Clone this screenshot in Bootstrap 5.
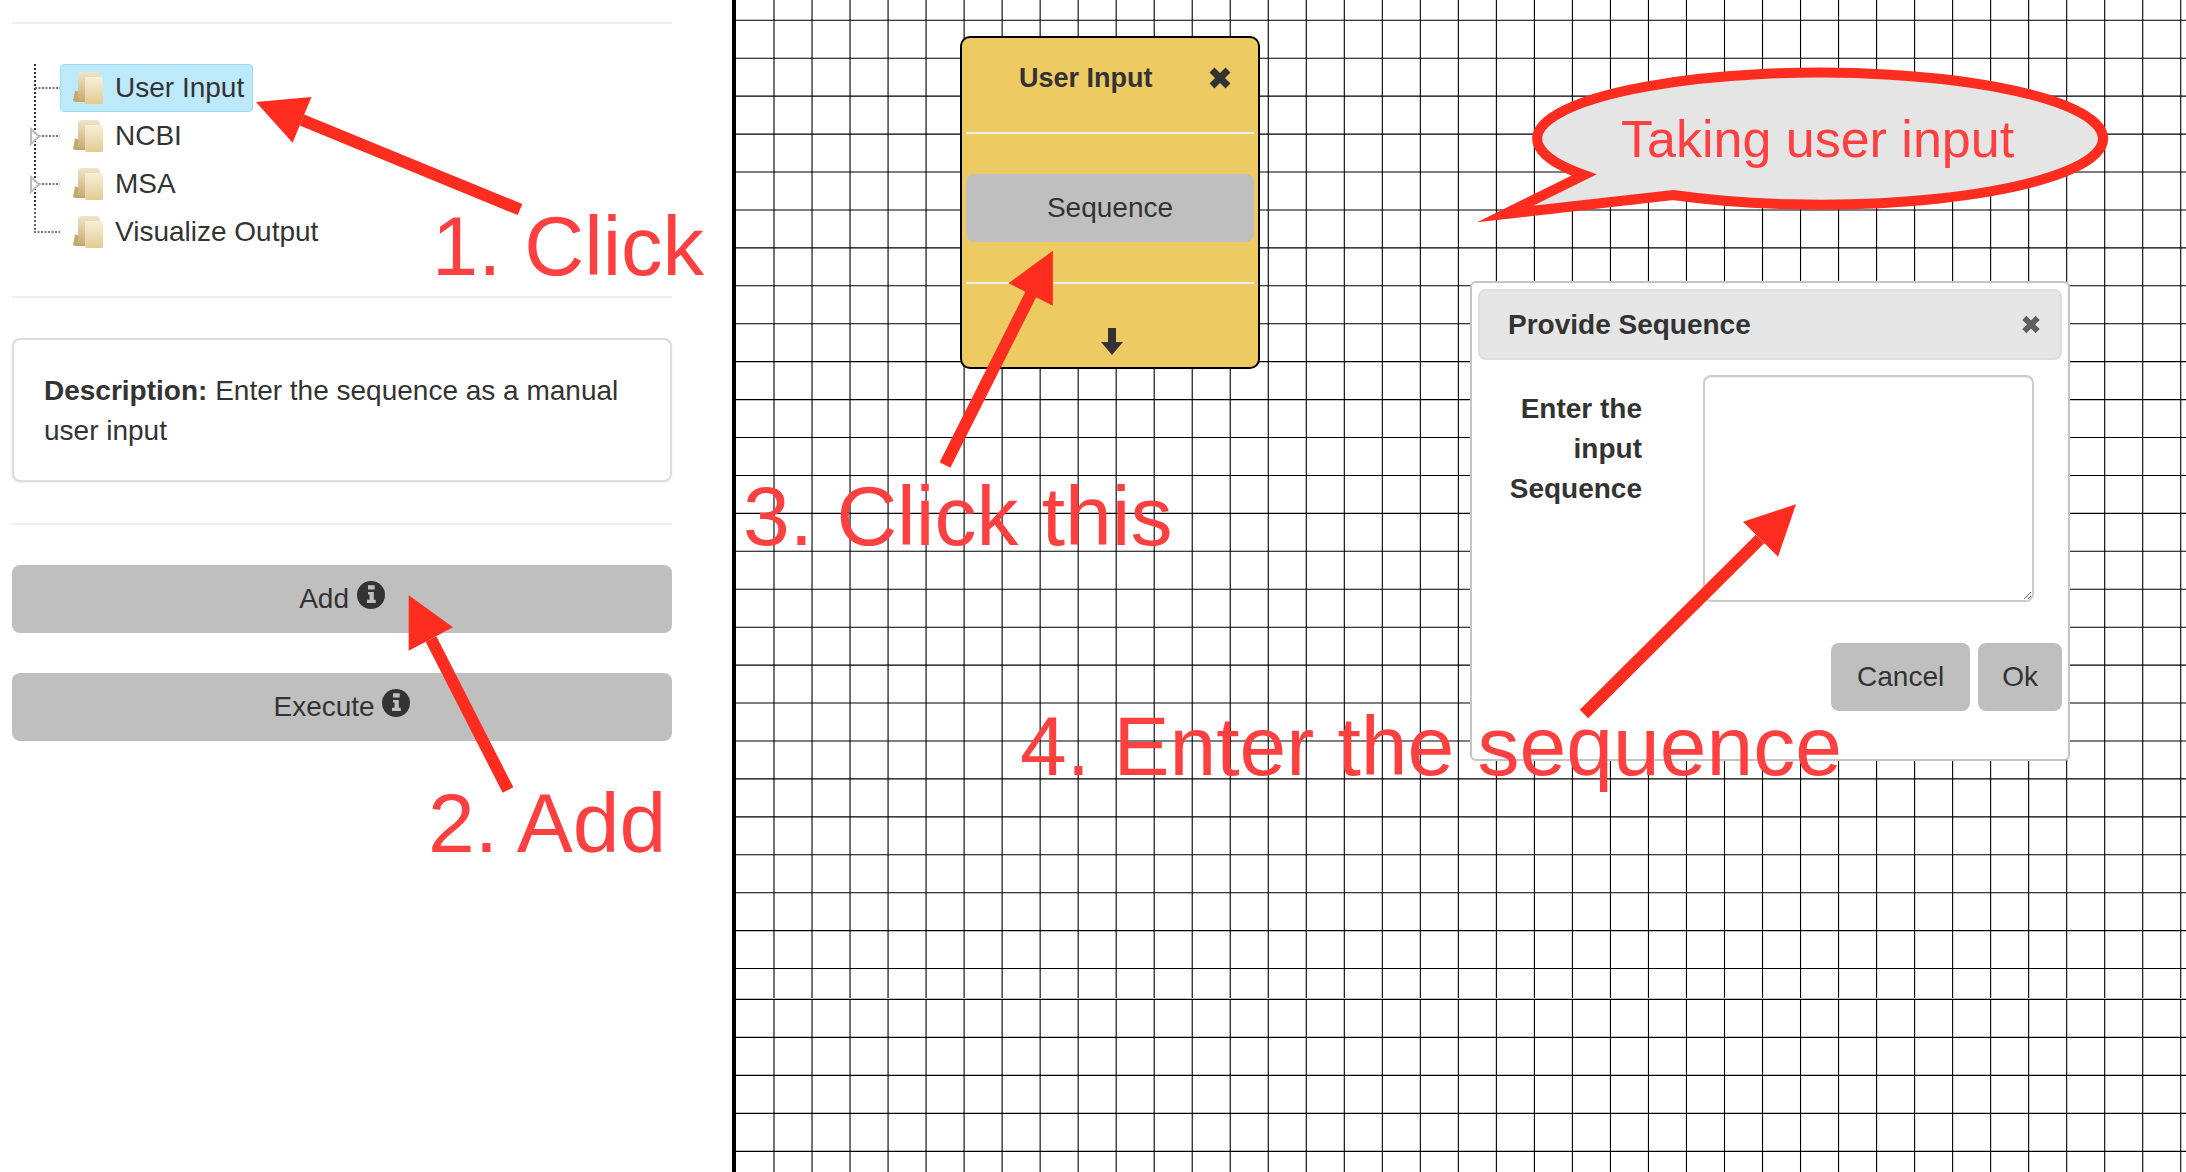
<!DOCTYPE html>
<html lang="en">
<head>
    <meta charset="UTF-8">
    <title>Workflow Builder</title>
    <link href="https://cdn.jsdelivr.net/npm/bootstrap@5.3.3/dist/css/bootstrap.min.css" rel="stylesheet">
    <style>
        body { font-family: "Liberation Sans", Arial, sans-serif; font-size: 28px; line-height: 40px; color: #333; overflow: hidden; }
        .page-wrap { width: 2186px; height: 1172px; }

        /* left panel */
        .side-panel { width: 732px; padding: 22px 60px 0 12px; }
        .rule { margin: 0; border: 0; border-top: 2px solid #eee; opacity: 1; }
        .tree-list { margin: 40px 0; }
        .tree-row { height: 48px; }
        .tree-label { height: 48px; padding: 0 8px 0 12px; gap: 12px; border: 1px solid transparent; border-radius: 4px; }
        .tree-label.picked { background: #bde9fd; border-color: #a5d8ee; }
        .desc-box { margin: 40px 0 41px; padding: 31px 30px 29px; border: 2px solid #ddd; border-radius: 8px; box-shadow: 0 1px 2px rgba(0,0,0,.08); }
        .grey-btn { background: #bfbfbf; border: 0; border-radius: 8px; color: #333; font-size: 28px; line-height: 40px; padding: 14px 0; }
        .grey-btn svg { vertical-align: -1px; }
        .side-actions { margin-top: 40px; gap: 40px; }

        /* canvas */
        .grid-canvas { border-left: 4px solid #000; background: #fff; }
        .grid-lines { left: 0; top: 0; width: 100%; height: 100%; }
        .flow-node { left: 224px; top: 36px; width: 300px; height: 333px; padding: 0 4px; background: #eeca62; border: 2px solid #000; border-radius: 10px; }
        .node-head { height: 80px; padding: 0 22px 0 53px; font-weight: 700; font-size: 27px; }
        .flow-node .rule-a { margin: 14px 0 40px; }
        .flow-node .rule-b { margin: 40px 0 44px; }
        .node-foot { padding-left: 3px; }

        .dlg-box { left: 734px; top: 281px; width: 600px; height: 480px; padding: 6px; border: 2px solid #c4c4c4; border-radius: 6px; }
        .dlg-head { height: 71px; padding: 0 19px 0 28px; background: #e6e6e6; border: 2px solid #ddd; border-radius: 8px !important; font-weight: 700; }
        .dlg-main { margin-top: 15px; gap: 61px; }
        .dlg-label { width: 164px; padding: 14px 0 0 14px; text-align: right; font-weight: 700; }
        .dlg-input { width: 331px; height: 227px; border: 2px solid #ccc; border-radius: 8px; box-shadow: inset 0 1px 1px rgba(0,0,0,.075); }
        .dlg-foot { margin-top: 41px; gap: 8px; }
        .dlg-foot .grey-btn { padding: 14px 26px; }
        .dlg-foot .ok-btn { padding: 14px 24px; }

        /* red annotations drawn over the screenshot */
        .mark-layer { left: 0; top: 0; width: 2186px; height: 1172px; pointer-events: none; }
        .mark-text { position: absolute; font-size: 84px; line-height: 1; color: #ff4040; white-space: nowrap; }
        .mark-1 { left: 432px; top: 205px; font-size: 83px; }
        .mark-2 { left: 428px; top: 781px; }
        .mark-3 { left: 743px; top: 474px; }
        .mark-4 { left: 1020px; top: 704px; }
        .mark-bubble { left: 1621px; top: 113px; font-size: 52px; }
    </style>
</head>
<body>

<svg width="0" height="0" class="position-absolute">
    <defs>
        <linearGradient id="folderBack" x1="0" y1="0" x2="0" y2="1">
            <stop offset="0" stop-color="#f0e5c8"/>
            <stop offset="1" stop-color="#c9ae75"/>
        </linearGradient>
        <linearGradient id="folderFront" x1="0" y1="0" x2="0" y2="1">
            <stop offset="0" stop-color="#f8f0da"/>
            <stop offset="1" stop-color="#e3cb92"/>
        </linearGradient>
        <symbol id="folder" viewBox="0 0 30 32">
            <path d="M0 29 L2 19 H13 V30 H2 Z" fill="#c4a86e"/>
            <rect x="5" y="0" width="22" height="28" rx="3" fill="url(#folderBack)"/>
            <rect x="12" y="5" width="18" height="27" rx="1.5" fill="url(#folderFront)"/>
        </symbol>
        <symbol id="info" viewBox="0 0 28 28">
            <circle cx="14" cy="14" r="14" fill="#333"/>
            <path d="M11 4.3 H17.7 V8.4 H11 Z M11 11 H16.8 V18.8 H18.8 V22 H10 V18.8 H12.6 V13.4 H11 Z" fill="#bfbfbf"/>
        </symbol>
        <symbol id="cross" viewBox="0 0 24 22">
            <path d="M4 3 L20 19 M20 3 L4 19" stroke="#333" stroke-width="7" fill="none"/>
        </symbol>
    </defs>
</svg>

<div class="page-wrap d-flex position-relative">

    <div class="side-panel flex-shrink-0">
        <hr class="rule">

        <ul class="tree-list list-unstyled">
            <li class="tree-row d-flex">
                <svg width="48" height="48"><path d="M23 0 V48" stroke="#333" stroke-width="2" stroke-dasharray="2 2"/><path d="M23 24 H48" stroke="#777" stroke-width="2" stroke-dasharray="2 1.5"/></svg>
                <span class="tree-label picked d-inline-flex align-items-center">
                    <svg width="30" height="32"><use href="#folder"/></svg>User Input
                </span>
            </li>
            <li class="tree-row d-flex">
                <svg width="48" height="48"><path d="M23 0 V48" stroke="#333" stroke-width="2" stroke-dasharray="2 2"/><path d="M23 24 H48" stroke="#777" stroke-width="2" stroke-dasharray="2 1.5"/><path d="M19 17 L27 24.5 L19 32 Z" fill="#fff" stroke="#bbb" stroke-width="2"/></svg>
                <span class="tree-label d-inline-flex align-items-center">
                    <svg width="30" height="32"><use href="#folder"/></svg>NCBI
                </span>
            </li>
            <li class="tree-row d-flex">
                <svg width="48" height="48"><path d="M23 0 V48" stroke="#333" stroke-width="2" stroke-dasharray="2 2"/><path d="M23 24 H48" stroke="#777" stroke-width="2" stroke-dasharray="2 1.5"/><path d="M19 17 L27 24.5 L19 32 Z" fill="#fff" stroke="#bbb" stroke-width="2"/></svg>
                <span class="tree-label d-inline-flex align-items-center">
                    <svg width="30" height="32"><use href="#folder"/></svg>MSA
                </span>
            </li>
            <li class="tree-row d-flex">
                <svg width="48" height="48"><path d="M23 0 V25" stroke="#666" stroke-width="2" stroke-dasharray="2 2"/><path d="M22 24 H48" stroke="#777" stroke-width="2" stroke-dasharray="2 1.5"/></svg>
                <span class="tree-label d-inline-flex align-items-center">
                    <svg width="30" height="32"><use href="#folder"/></svg>Visualize Output
                </span>
            </li>
        </ul>

        <hr class="rule">

        <div class="desc-box"><strong>Description:</strong> Enter the sequence as a manual user input</div>

        <hr class="rule">

        <div class="side-actions d-flex flex-column">
            <button type="button" class="btn grey-btn w-100">Add <svg width="28" height="28"><use href="#info"/></svg></button>
            <button type="button" class="btn grey-btn w-100">Execute <svg width="28" height="28"><use href="#info"/></svg></button>
        </div>
    </div>

    <div class="grid-canvas flex-grow-1 position-relative">
        <svg class="grid-lines position-absolute"><path id="gridPath" fill="none" stroke="#000" stroke-width="1.1"/></svg>

        <div class="flow-node position-absolute">
            <div class="node-head d-flex align-items-center justify-content-between">
                <span>User Input</span>
                <svg width="24" height="22"><use href="#cross"/></svg>
            </div>
            <hr class="rule rule-a">
            <button type="button" class="btn grey-btn w-100">Sequence</button>
            <hr class="rule rule-b">
            <div class="node-foot d-flex justify-content-center">
                <svg width="22" height="27" viewBox="0 0 22 27"><path d="M7 0 H15 V14 H22 L11 27 L0 14 H7 Z" fill="#333"/></svg>
            </div>
        </div>

        <div class="card dlg-box position-absolute">
            <div class="card-header dlg-head d-flex align-items-center justify-content-between">
                <span>Provide Sequence</span>
                <svg width="20" height="19" class="opacity-75"><use href="#cross"/></svg>
            </div>
            <div class="dlg-main d-flex align-items-start">
                <label class="dlg-label" for="seqInput">Enter the input Sequence</label>
                <textarea id="seqInput" class="form-control dlg-input"></textarea>
            </div>
            <div class="dlg-foot d-flex justify-content-end">
                <button type="button" class="btn grey-btn">Cancel</button>
                <button type="button" class="btn grey-btn ok-btn">Ok</button>
            </div>
        </div>
    </div>

    <div class="mark-layer position-absolute">
        <svg width="2186" height="1172" class="position-absolute top-0 start-0">
            <path d="M1673 195 A283 66 0 1 0 1584 175 L1505 214 Z" fill="#e5e5e5" stroke="#ff2d1f" stroke-width="10" stroke-miterlimit="20"/>
            <g stroke="#ff2d1f" stroke-width="12">
                <line x1="520" y1="209.5" x2="302" y2="120"/>
                <line x1="508" y1="790" x2="431" y2="639"/>
                <line x1="945" y1="465" x2="1031" y2="294"/>
                <line x1="1584" y1="714" x2="1760" y2="539"/>
            </g>
            <g fill="#ff2d1f">
                <polygon points="256,102 311.5,97 292.6,142.7"/>
                <polygon points="408.7,595.3 453,627.3 408.7,650.7"/>
                <polygon points="1052.9,250.7 1008.6,283.2 1052.9,305.7"/>
                <polygon points="1796,504.3 1743,521.7 1778,556.7"/>
            </g>
        </svg>
        <span class="mark-text mark-1">1. Click</span>
        <span class="mark-text mark-2">2. Add</span>
        <span class="mark-text mark-3">3. Click this</span>
        <span class="mark-text mark-4">4. Enter the sequence</span>
        <span class="mark-text mark-bubble">Taking user input</span>
    </div>
</div>

<script src="https://cdn.jsdelivr.net/npm/bootstrap@5.3.3/dist/js/bootstrap.bundle.min.js"></script>
<script>
    // grid lines: the drawing is two captures joined at y=998, so rows restart there
    let d = '';
    for (let x = 38; x < 1450; x += 38.02) {
        d += `M${x} 0V998M${x} 999V1172`;
    }
    for (let k = 0; k <= 25; k++) {
        d += `M0 ${20.3 + 37.93 * k}H1450`;
    }
    for (let k = 0; k <= 4; k++) {
        d += `M0 ${999.4 + 38 * k}H1450`;
    }
    document.getElementById('gridPath').setAttribute('d', d);
</script>
</body>
</html>
